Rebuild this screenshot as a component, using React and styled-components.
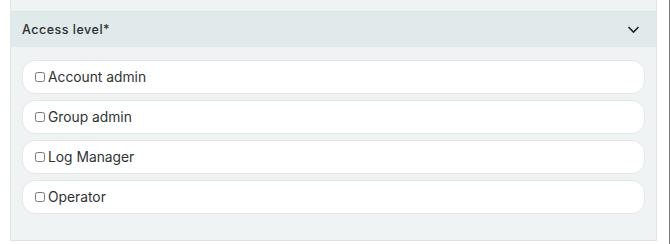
import styled, { createGlobalStyle } from "styled-components";

const GlobalStyle = createGlobalStyle`
  html, body {
    margin: 0;
    padding: 0;
    background: #ffffff;
    font-family: Inter, "Noto Sans", "Liberation Sans", sans-serif;
  }
`;

const Page = styled.div`
  width: 670px;
  height: 244px;
  box-sizing: border-box;
  padding: 0 12px 0 10px;
  border-right: 1px solid #7a7a7a;
  overflow: hidden;
`;

const Panel = styled.section`
  background: #eff3f4;
  border-left: 1px solid #e1e8e8;
  border-right: 1px solid #e1e8e8;
  padding-top: 11px;
  height: 241px;
  box-sizing: border-box;
  border-bottom: 1px solid #dbe4e4;
`;

const Header = styled.button`
  all: unset;
  box-sizing: border-box;
  display: flex;
  align-items: center;
  justify-content: space-between;
  width: 100%;
  height: 36px;
  padding: 0 16px 0 11px;
  background: #e1eaea;
  border-top: 1px solid #d9e3e3;
  cursor: pointer;
`;

const Title = styled.span`
  font-size: 12.5px;
  font-weight: 500;
  letter-spacing: 0.5px;
  color: #2a3031;
`;

const List = styled.div`
  display: flex;
  flex-direction: column;
  gap: 6px;
  padding: 13px 11px 0 11px;
`;

const Option = styled.label`
  display: flex;
  align-items: center;
  height: 34px;
  box-sizing: border-box;
  padding: 0 11px 1px;
  background: #ffffff;
  border: 1px solid #e3e7e7;
  border-radius: 13px;
  font-size: 13.8px;
  color: #2e3334;
  cursor: pointer;
`;

const Box = styled.input`
  width: 10px;
  height: 10px;
  margin: 0 3px 0 1px;
`;

const levels = ["Account admin", "Group admin", "Log Manager", "Operator"];

export default function App() {
  return (
    <Page>
      <GlobalStyle />
      <Panel>
        <Header>
          <Title>Access level*</Title>
          <svg width="13" height="9" viewBox="0 0 13 9" fill="none">
            <path d="M1.5 2 6.5 7l5-5" stroke="#1f2526" strokeWidth="1.6" />
          </svg>
        </Header>
        <List>
          {levels.map((l) => (
            <Option key={l}>
              <Box type="checkbox" />
              {l}
            </Option>
          ))}
        </List>
      </Panel>
    </Page>
  );
}
